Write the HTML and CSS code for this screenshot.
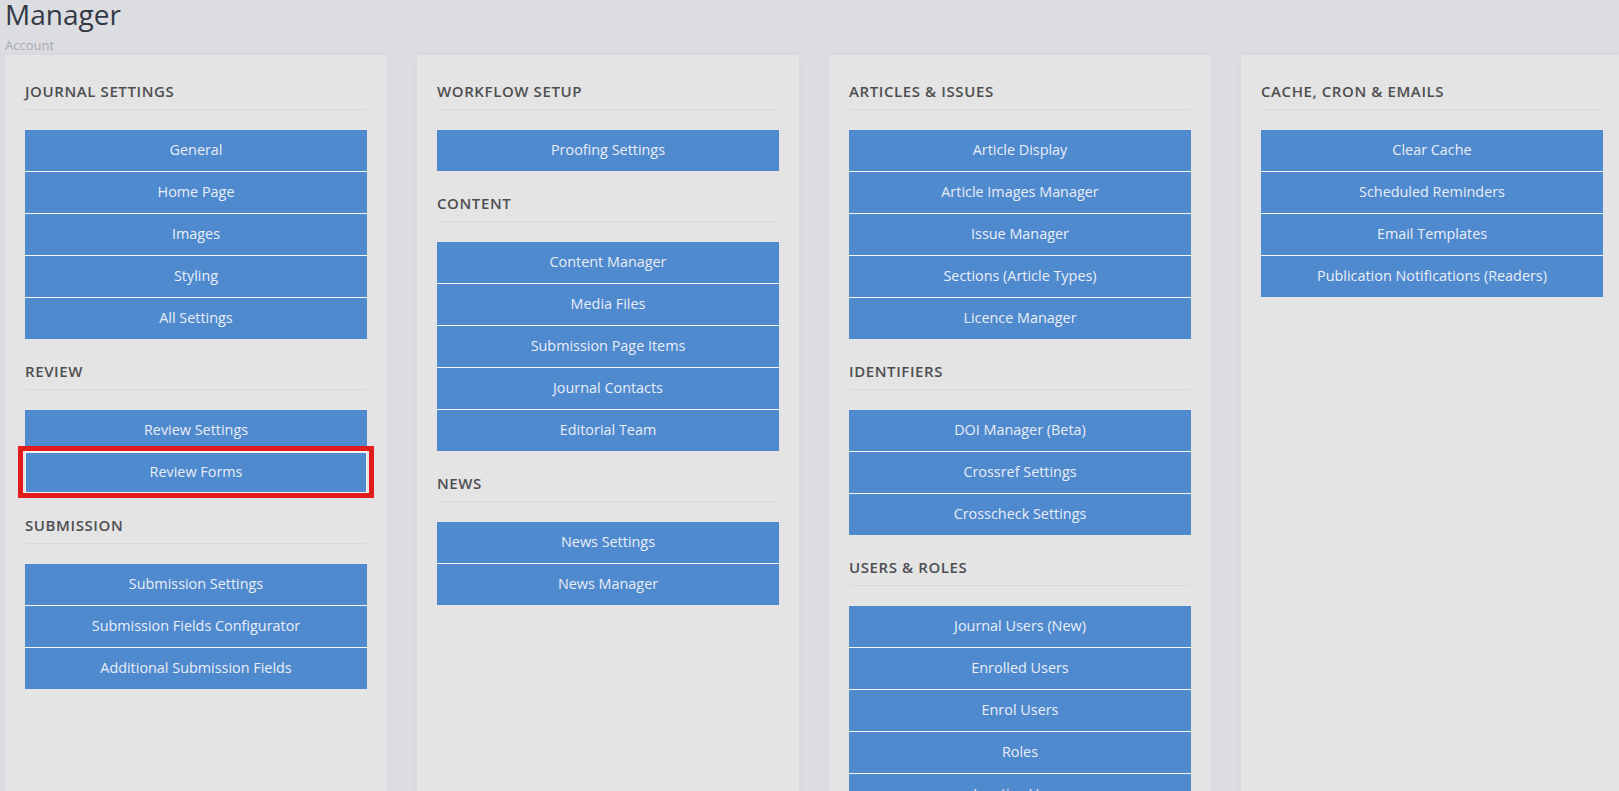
FILE: index.html
```html
<!DOCTYPE html>
<html lang="en">
<head>
    <meta charset="UTF-8">
    <meta name="viewport" content="width=device-width, initial-scale=1.0">
    <title>Manager</title>
    <link rel="stylesheet" href="styles.css">
</head>
<body>
    <div class="page-header">
        <h1 class="page-title">Manager</h1>
        <div class="breadcrumb">Account</div>
    </div>

    <div class="manager-grid">
        <!-- Column 1 -->
        <div class="panel">
            <div class="section">
                <h4 class="section-title">Journal Settings</h4>
                <ul class="link-list">
                    <li><a href="#">General</a></li>
                    <li><a href="#">Home Page</a></li>
                    <li><a href="#">Images</a></li>
                    <li><a href="#">Styling</a></li>
                    <li><a href="#">All Settings</a></li>
                </ul>
            </div>
            <div class="section">
                <h4 class="section-title">Review</h4>
                <ul class="link-list">
                    <li><a href="#">Review Settings</a></li>
                    <li class="highlight"><a href="#" class="focused">Review Forms</a></li>
                </ul>
            </div>
            <div class="section">
                <h4 class="section-title">Submission</h4>
                <ul class="link-list">
                    <li><a href="#">Submission Settings</a></li>
                    <li><a href="#">Submission Fields Configurator</a></li>
                    <li><a href="#">Additional Submission Fields</a></li>
                </ul>
            </div>
        </div>

        <!-- Column 2 -->
        <div class="panel">
            <div class="section">
                <h4 class="section-title">Workflow Setup</h4>
                <ul class="link-list">
                    <li><a href="#">Proofing Settings</a></li>
                </ul>
            </div>
            <div class="section">
                <h4 class="section-title">Content</h4>
                <ul class="link-list">
                    <li><a href="#">Content Manager</a></li>
                    <li><a href="#">Media Files</a></li>
                    <li><a href="#">Submission Page Items</a></li>
                    <li><a href="#">Journal Contacts</a></li>
                    <li><a href="#">Editorial Team</a></li>
                </ul>
            </div>
            <div class="section">
                <h4 class="section-title">News</h4>
                <ul class="link-list">
                    <li><a href="#">News Settings</a></li>
                    <li><a href="#">News Manager</a></li>
                </ul>
            </div>
        </div>

        <!-- Column 3 -->
        <div class="panel">
            <div class="section">
                <h4 class="section-title">Articles &amp; Issues</h4>
                <ul class="link-list">
                    <li><a href="#">Article Display</a></li>
                    <li><a href="#">Article Images Manager</a></li>
                    <li><a href="#">Issue Manager</a></li>
                    <li><a href="#">Sections (Article Types)</a></li>
                    <li><a href="#">Licence Manager</a></li>
                </ul>
            </div>
            <div class="section">
                <h4 class="section-title">Identifiers</h4>
                <ul class="link-list">
                    <li><a href="#">DOI Manager (Beta)</a></li>
                    <li><a href="#">Crossref Settings</a></li>
                    <li><a href="#">Crosscheck Settings</a></li>
                </ul>
            </div>
            <div class="section">
                <h4 class="section-title">Users &amp; Roles</h4>
                <ul class="link-list">
                    <li><a href="#">Journal Users (New)</a></li>
                    <li><a href="#">Enrolled Users</a></li>
                    <li><a href="#">Enrol Users</a></li>
                    <li><a href="#">Roles</a></li>
                    <li><a href="#">Inactive Users</a></li>
                    <li><a href="#">Merge Users</a></li>
                </ul>
            </div>
        </div>

        <!-- Column 4 -->
        <div class="panel">
            <div class="section">
                <h4 class="section-title">Cache, Cron &amp; Emails</h4>
                <ul class="link-list">
                    <li><a href="#">Clear Cache</a></li>
                    <li><a href="#">Scheduled Reminders</a></li>
                    <li><a href="#">Email Templates</a></li>
                    <li><a href="#">Publication Notifications (Readers)</a></li>
                </ul>
            </div>
        </div>
    </div>
</body>
</html>
```

FILE: styles.css
```css
:root {
    --page-bg: #dcdde1;
    --panel-bg: #e4e4e4;
    --button: #4f89ce;
    --button-text: #e9eef6;
    --heading: #4d4e50;
}

html {
    overflow: hidden;
}

body {
    margin: 0;
    padding: 0 0 0 5px;
    background: var(--page-bg);
    font-family: "Open Sans", Arial, sans-serif;
    -webkit-font-smoothing: antialiased;
}

.page-title {
    margin: 0;
    font-size: 28px;
    line-height: 29px;
    font-weight: 400;
    color: #323945;
}

.breadcrumb {
    margin-top: 8px;
    font-size: 13px;
    line-height: 16px;
    color: #a9aaad;
}

.manager-grid {
    display: grid;
    grid-template-columns: repeat(4, 382px);
    column-gap: 30px;
    margin-top: 2px;
    width: 1640px;
}

.panel {
    background: var(--panel-bg);
    padding: 26px 20px 40px;
    min-height: 760px;
    box-shadow: 0 0 10px rgba(0, 0, 0, 0.03);
}

.section + .section {
    margin-top: 22px;
}

.section-title {
    margin: 0;
    padding-bottom: 8px;
    border-bottom: 1px solid #d9d9d9;
    font-size: 15px;
    line-height: 20px;
    font-weight: 600;
    letter-spacing: 0.6px;
    text-transform: uppercase;
    color: var(--heading);
}

.link-list {
    list-style: none;
    margin: 20px 0 0;
    padding: 0;
}

.link-list li + li {
    border-top: 1px solid #f4f4f4;
}

.link-list a {
    display: block;
    height: 40px;
    padding-bottom: 1px;
    line-height: 40px;
    background: var(--button);
    color: var(--button-text);
    text-align: center;
    text-decoration: none;
    font-size: 14.4px;
}

/* Review Forms has focus + marked in red */
.highlight {
    position: relative;
}

.link-list a.focused {
    box-shadow: inset 0 0 0 1px #f2f2f2;
}

.highlight::after {
    content: "";
    position: absolute;
    top: -6px;
    left: -7px;
    right: -7px;
    bottom: -5px;
    border: 5px solid #e31b1d;
    pointer-events: none;
}
```
